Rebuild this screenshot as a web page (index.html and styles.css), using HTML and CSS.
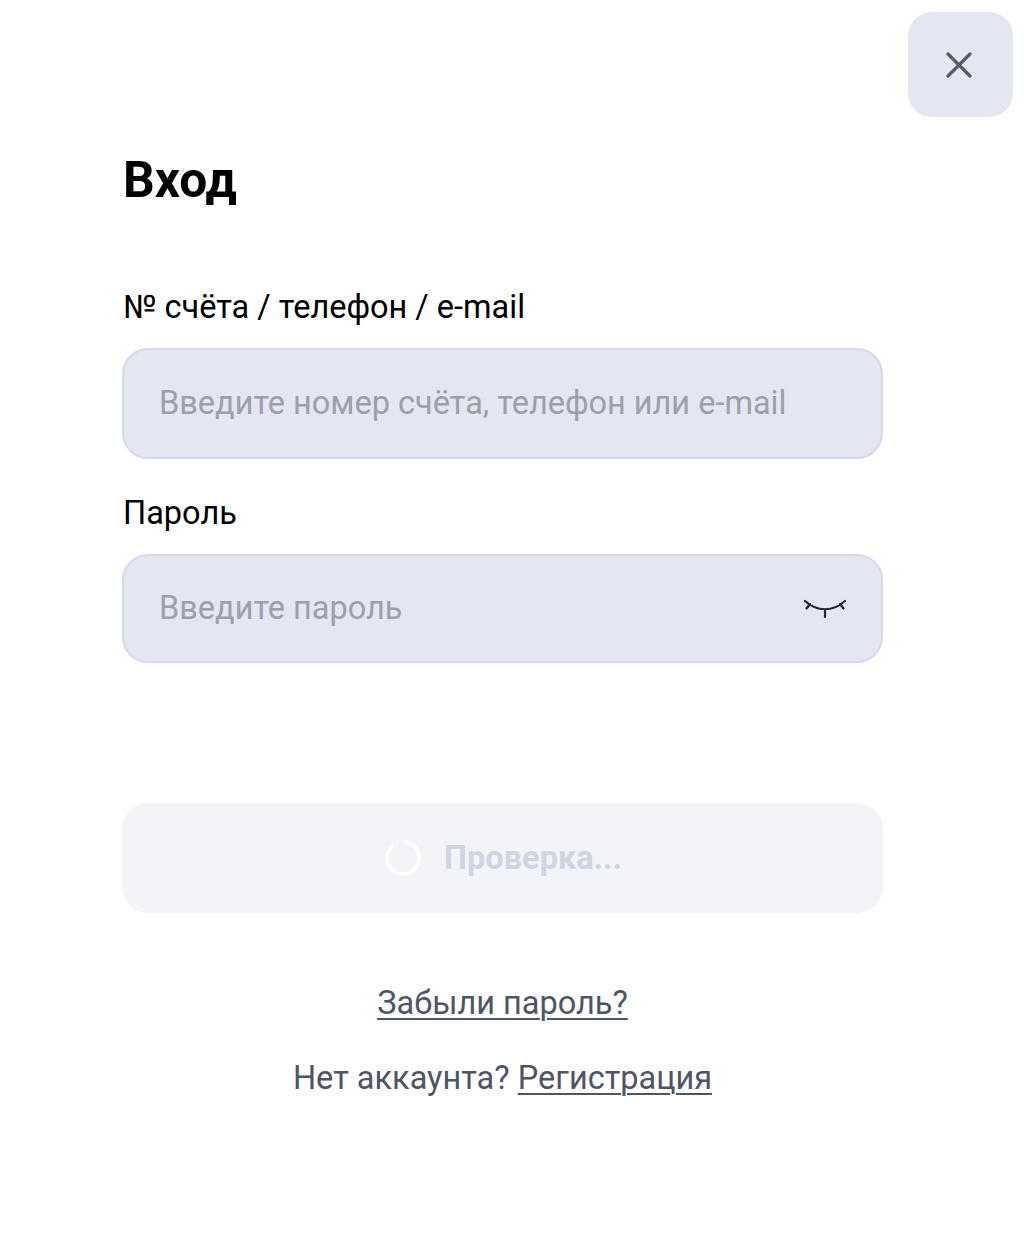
FILE: index.html
```html
<!DOCTYPE html>
<html>
<head>
<meta charset="UTF-8">
<title>Вход</title>
<link rel="stylesheet" href="styles.css">
</head>
<body>

<div class="wrap">
    <div class="close-row">
        <button class="close" type="button">
            <svg width="26" height="26" viewBox="0 0 26 26"><path d="M2 2 24 24M24 2 2 24" fill="none" stroke="#585c68" stroke-width="3.200" stroke-linecap="round"/></svg>
        </button>
    </div>
    <div class="form">
        <h1>Вход</h1>
        <label class="label label-first">№ счёта / телефон / e-mail</label>
        <div class="field field-first"><span class="hint">Введите номер счёта, телефон или e-mail</span></div>
        <label class="label label-second">Пароль</label>
        <div class="field field-second">
            <span class="hint">Введите пароль</span>
            <svg class="eye" width="44" height="24" viewBox="0 0 44 24"><path d="M2 5C14 16 30 16 42 5M7 8 3.500 12.500M37 8 40.500 12.500M22 14V21" fill="none" stroke="#23272f" stroke-width="2.200" stroke-linecap="round"/></svg>
        </div>
        <div class="submit">
            <svg width="36" height="36" viewBox="0 0 36 36"><path d="M21 2.300A16 16 0 1 1 7 6.500" fill="none" stroke="#fff" stroke-width="3.600" stroke-linecap="round"/></svg>
            <span>Проверка...</span>
        </div>
        <div class="links">
            <a href="#">Забыли пароль?</a>
            <p>Нет аккаунта? <a href="#">Регистрация</a></p>
        </div>
    </div>
</div>

</body>
</html>
```
FILE: styles.css
```css
* {
    margin: 0;
    padding: 0;
    box-sizing: border-box;
}

html {
    background: #fff;
}

body {
    font-family: Roboto, "Liberation Sans", sans-serif;
    color: #000;
}

.wrap {
    height: 1234px;
    overflow: hidden;
}

.close-row {
    display: flex;
    justify-content: flex-end;
    padding: 12px 11px 0 0;
}

.close {
    display: flex;
    align-items: center;
    justify-content: center;
    width: 105px;
    height: 105px;
    padding-right: 3px;
    border: 0;
    border-radius: 24px;
    background: #e4e7f2;
}

.form {
    width: 761px;
    margin: 33px 0 0 122px;
}

h1 {
    margin-left: 1px;
    line-height: 60px;
    font-size: 49.700px;
    font-weight: 700;
}

.label {
    display: block;
    margin-left: 1px;
    line-height: 40px;
    font-size: 32.500px;
}

.label-first {
    margin-top: 77px;
}

.label-second {
    margin-top: 34px;
}

.field {
    display: flex;
    align-items: center;
    justify-content: space-between;
    margin-top: 21px;
    padding: 0 36px 2px 35px;
    border: 2px solid #d5d9ec;
    border-radius: 26px;
    background: #e4e7f2;
}

.field-first {
    height: 111px;
}

.field-second {
    height: 109px;
}

.hint {
    font-size: 32.500px;
    color: #9d9fab;
}

.eye {
    margin: 0 -2px 0 0;
}

.submit {
    display: flex;
    align-items: center;
    justify-content: center;
    gap: 23px;
    height: 110px;
    margin-top: 140px;
    padding-left: 2px;
    border-radius: 26px;
    font-size: 32.500px;
    font-weight: 700;
    color: #d0d5e2;
    background: #f2f4f8;
}

.links {
    margin-top: 70px;
    text-align: center;
    line-height: 40px;
    font-size: 32.500px;
    color: #4f5565;
}

.links p {
    margin-top: 35px;
}

.links a {
    color: #4f5565;
    text-decoration: underline;
    text-underline-offset: 4px;
    text-decoration-thickness: 1.500px;
}
```
